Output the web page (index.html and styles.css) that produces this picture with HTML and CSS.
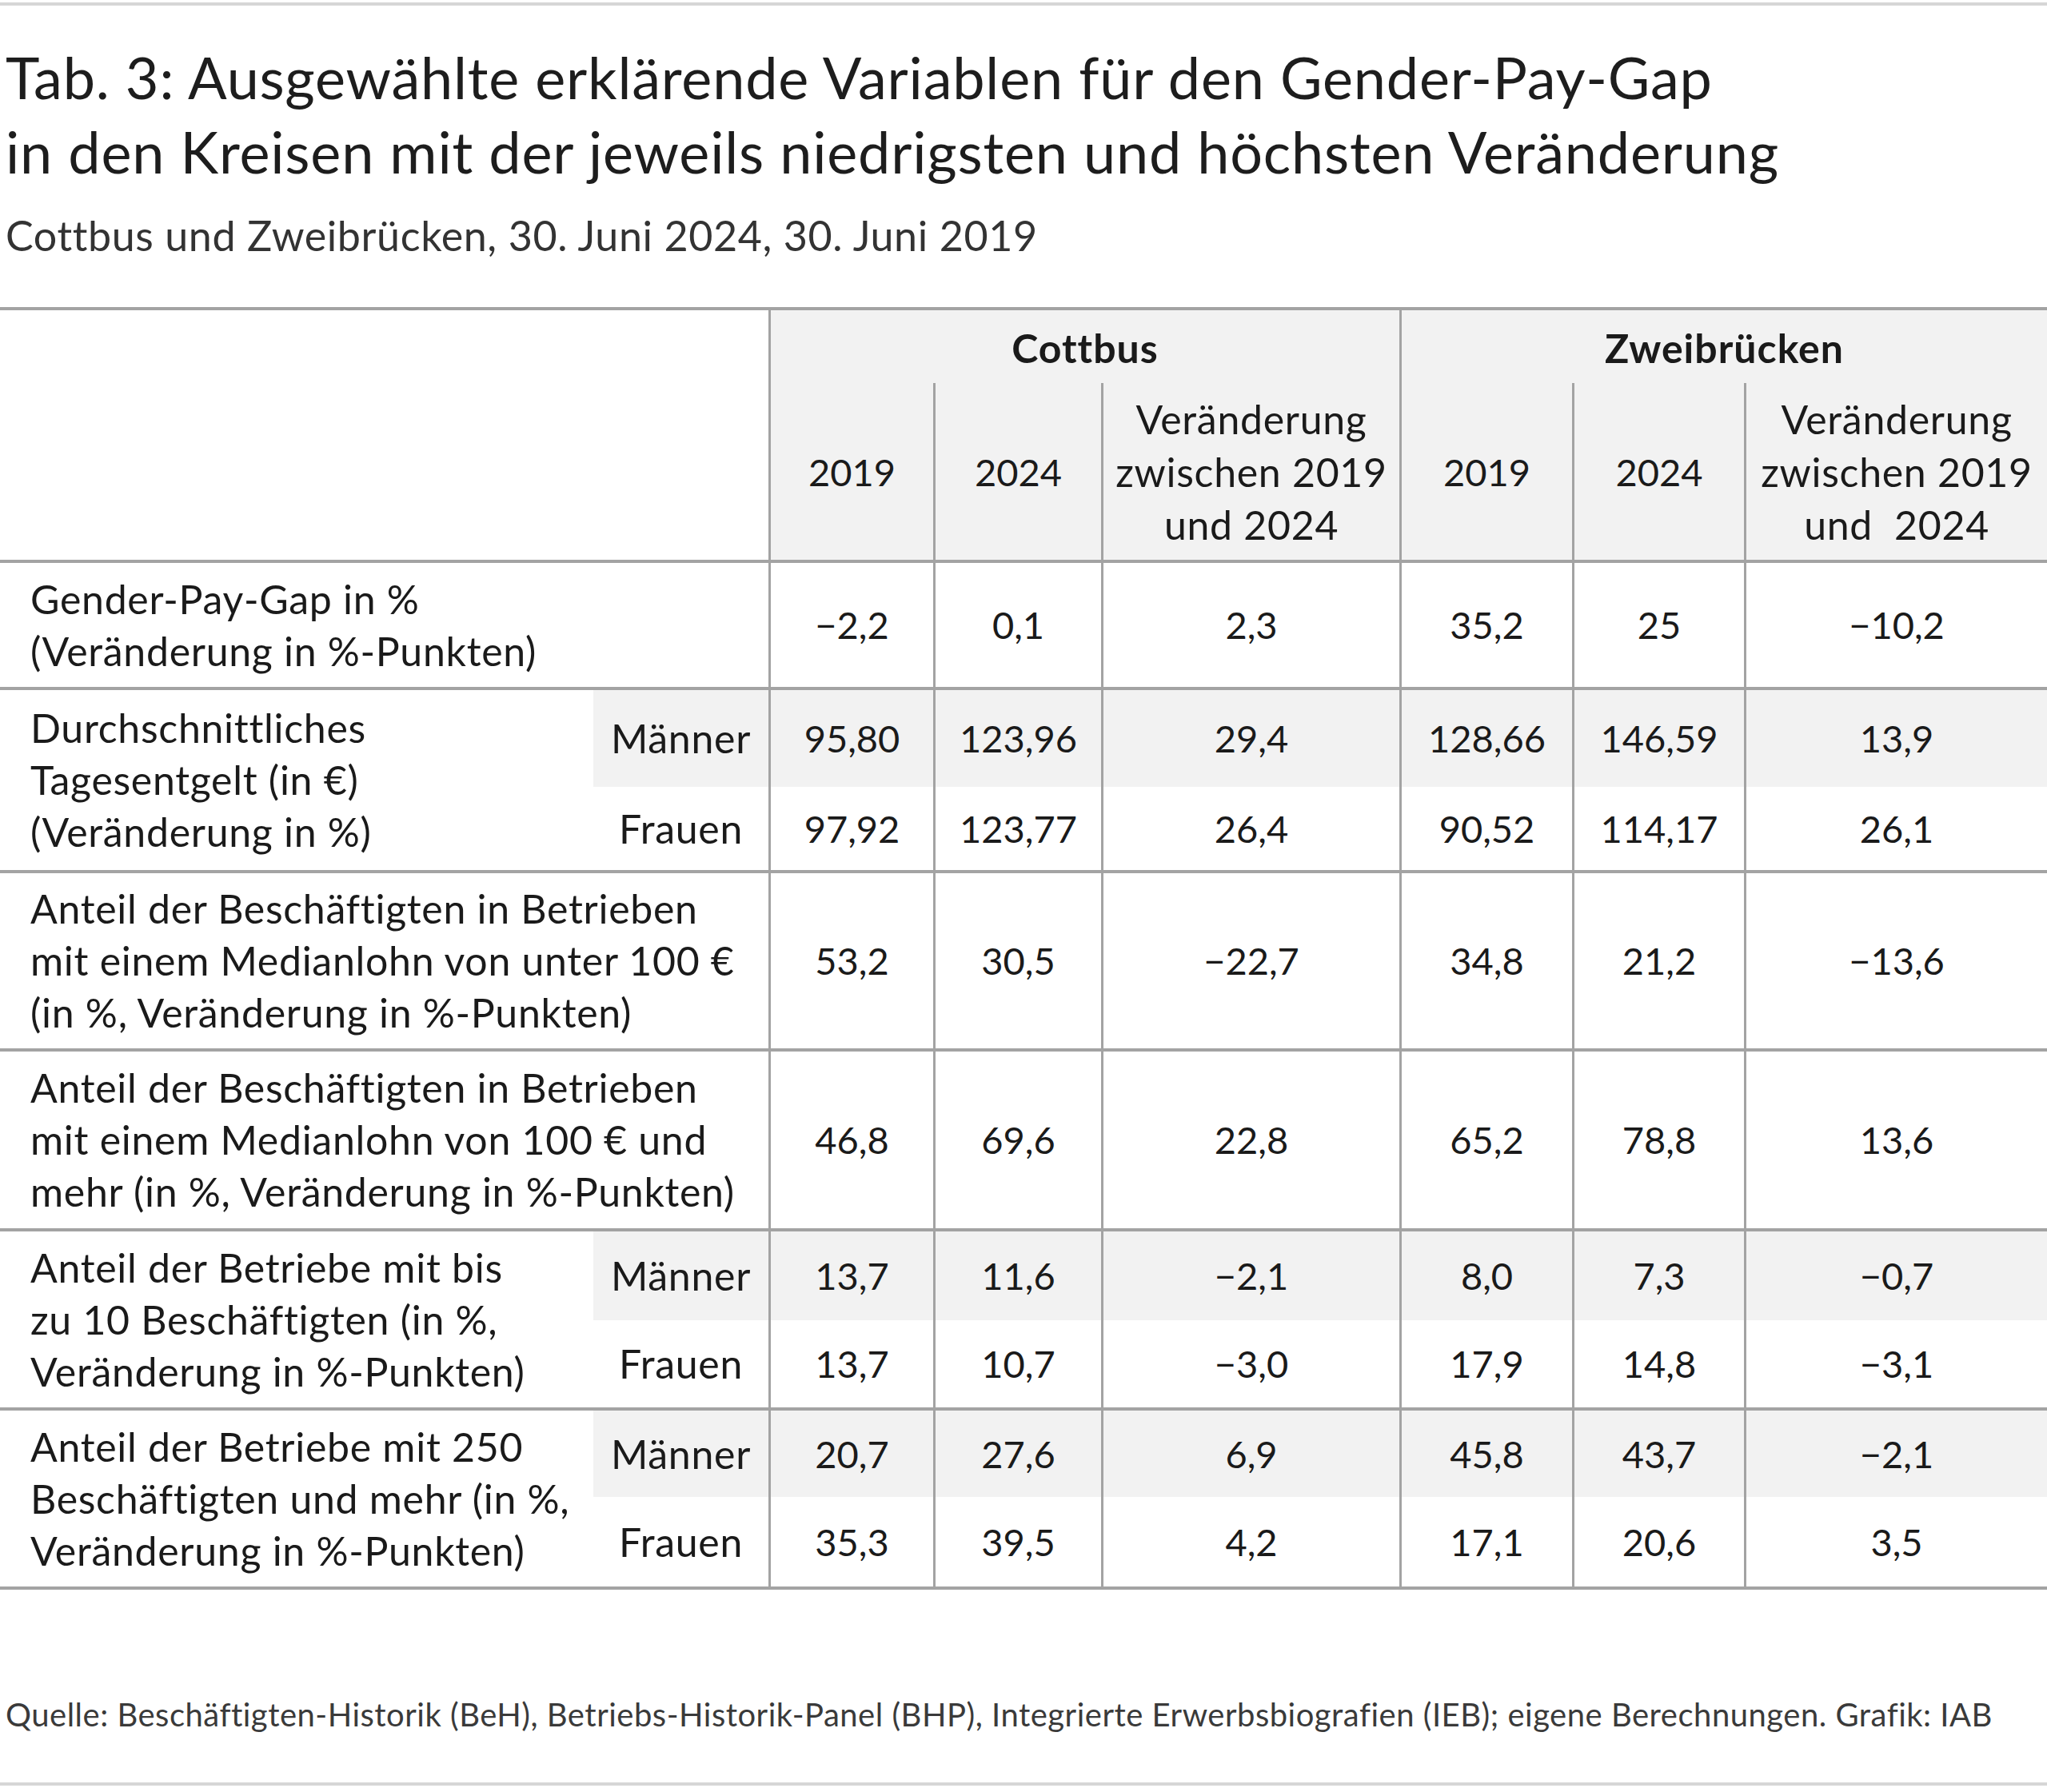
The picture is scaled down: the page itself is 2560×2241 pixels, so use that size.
FILE: index.html
```html
<!DOCTYPE html>
<html lang="de">
<head>
<meta charset="utf-8">
<title>Tab. 3</title>
<link rel="stylesheet" href="styles.css">
</head>
<body>
<div class="page">
  <div class="rule rule-top"></div>
  <h1 class="title">Tab. 3: Ausgewählte erklärende Variablen für den Gender-Pay-Gap<br>in den Kreisen mit der jeweils niedrigsten und höchsten Veränderung</h1>
  <p class="subtitle">Cottbus und Zweibrücken, 30. Juni 2024, 30. Juni 2019</p>

  <table class="tab">
    <colgroup>
      <col class="c-lbl"><col class="c-sex"><col class="c-a"><col class="c-b"><col class="c-c"><col class="c-d"><col class="c-e"><col class="c-f">
    </colgroup>
    <thead>
      <tr class="grp">
        <th class="corner" colspan="2" rowspan="2"></th>
        <th class="city" colspan="3">Cottbus</th>
        <th class="city" colspan="3">Zweibrücken</th>
      </tr>
      <tr class="sub">
        <th>2019</th><th>2024</th><th class="txt">Veränderung<br>zwischen 2019<br>und 2024</th>
        <th>2019</th><th>2024</th><th class="txt">Veränderung<br>zwischen 2019<br>und&nbsp; 2024</th>
      </tr>
    </thead>
    <tbody>
      <tr class="single h1">
        <td class="lbl" colspan="2">Gender-Pay-Gap in %<br>(Veränderung in %-Punkten)</td>
        <td>−2,2</td><td>0,1</td><td>2,3</td><td>35,2</td><td>25</td><td>−10,2</td>
      </tr>
    </tbody>
    <tbody>
      <tr class="m h2m">
        <td class="lbl" rowspan="2">Durchschnittliches<br>Tagesentgelt (in €)<br>(Veränderung in %)</td>
        <td class="sex">Männer</td>
        <td>95,80</td><td>123,96</td><td>29,4</td><td>128,66</td><td>146,59</td><td>13,9</td>
      </tr>
      <tr class="f h2f">
        <td class="sex">Frauen</td>
        <td>97,92</td><td>123,77</td><td>26,4</td><td>90,52</td><td>114,17</td><td>26,1</td>
      </tr>
    </tbody>
    <tbody>
      <tr class="single h3">
        <td class="lbl" colspan="2">Anteil der Beschäftigten in Betrieben<br>mit einem Medianlohn von unter 100 €<br>(in %, Veränderung in %-Punkten)</td>
        <td>53,2</td><td>30,5</td><td>−22,7</td><td>34,8</td><td>21,2</td><td>−13,6</td>
      </tr>
    </tbody>
    <tbody>
      <tr class="single h4">
        <td class="lbl" colspan="2">Anteil der Beschäftigten in Betrieben<br>mit einem Medianlohn von 100 € und<br>mehr (in %, Veränderung in %-Punkten)</td>
        <td>46,8</td><td>69,6</td><td>22,8</td><td>65,2</td><td>78,8</td><td>13,6</td>
      </tr>
    </tbody>
    <tbody>
      <tr class="m h5m">
        <td class="lbl" rowspan="2">Anteil der Betriebe mit bis<br>zu 10 Beschäftigten (in %,<br>Veränderung in %-Punkten)</td>
        <td class="sex">Männer</td>
        <td>13,7</td><td>11,6</td><td>−2,1</td><td>8,0</td><td>7,3</td><td>−0,7</td>
      </tr>
      <tr class="f h5f">
        <td class="sex">Frauen</td>
        <td>13,7</td><td>10,7</td><td>−3,0</td><td>17,9</td><td>14,8</td><td>−3,1</td>
      </tr>
    </tbody>
    <tbody class="last">
      <tr class="m h6m">
        <td class="lbl" rowspan="2">Anteil der Betriebe mit 250<br>Beschäftigten und mehr (in %,<br>Veränderung in %-Punkten)</td>
        <td class="sex">Männer</td>
        <td>20,7</td><td>27,6</td><td>6,9</td><td>45,8</td><td>43,7</td><td>−2,1</td>
      </tr>
      <tr class="f h6f">
        <td class="sex">Frauen</td>
        <td>35,3</td><td>39,5</td><td>4,2</td><td>17,1</td><td>20,6</td><td>3,5</td>
      </tr>
    </tbody>
  </table>

  <p class="source">Quelle: Beschäftigten-Historik (BeH), Betriebs-Historik-Panel (BHP), Integrierte Erwerbsbiografien (IEB); eigene Berechnungen. Grafik: IAB</p>
  <div class="rule rule-bottom"></div>
</div>
</body>
</html>
```

FILE: styles.css
```css
html, body {
  margin: 0;
  padding: 0;
  background: #ffffff;
}

body {
  font-family: Lato, "Open Sans", "Liberation Sans", sans-serif;
  color: #1a1a1a;
}

.page {
  width: 2560px;
  display: flex;
  flex-direction: column;
}

.rule {
  height: 4px;
  background: #d6d6d6;
}

.rule-top {
  margin-top: 3px;
}

.title {
  margin: 43px 0 0 0;
  padding-left: 7px;
  font-size: 72px;
  letter-spacing: 0.8px;
  line-height: 93px;
  font-weight: 400;
  color: #1d1d1d;
  white-space: nowrap;
}

.subtitle {
  margin: 23px 0 0 0;
  padding-left: 7px;
  font-size: 52px;
  letter-spacing: 0.6px;
  line-height: 70px;
  color: #333333;
  white-space: nowrap;
}

/* table */
.tab {
  margin-top: 55px;
  width: 2560px;
  table-layout: fixed;
  border-collapse: separate;
  border-spacing: 0;
  font-size: 47px;
  line-height: 65px;
  color: #1a1a1a;
}

.c-lbl { width: 742px; }
.c-sex { width: 219px; }
.c-a { width: 206px; }
.c-b { width: 210px; }
.c-c { width: 373px; }
.c-d { width: 216px; }
.c-e { width: 215px; }
.c-f { width: 379px; }

.tab th,
.tab td {
  box-sizing: border-box;
  padding: 0;
  text-align: center;
  vertical-align: middle;
  white-space: nowrap;
  font-weight: 400;
}

.tab td {
  border-left: 3px solid #a3a3a3;
}

.tab td.lbl,
.tab td.sex,
.tab th.txt {
  font-size: 50px;
  letter-spacing: 0.7px;
}

.tab td.lbl {
  border-left: 0;
  text-align: left;
  padding-left: 38px;
  background: #ffffff;
}

.tab td.sex {
  border-left: 0;
}

/* header */
.grp th {
  border-top: 4px solid #a3a3a3;
  height: 95px;
}

.grp th.corner {
  background: #ffffff;
}

.grp th.city {
  background: #f2f2f2;
  border-left: 3px solid #a3a3a3;
  font-size: 50px;
  letter-spacing: 1px;
  font-weight: 700;
  padding-top: 4px;
}

.sub th {
  background: #f2f2f2;
  border-left: 3px solid #a3a3a3;
  height: 221px;
  line-height: 66px;
}

/* body rows: horizontal group rules */
.single td,
.m td {
  border-top: 4px solid #a3a3a3;
}

.m td {
  background: #f2f2f2;
}

.last .f td,
.last td.lbl {
  border-bottom: 4px solid #a3a3a3;
}

.h1 td { height: 159px; }
.h2m td { height: 125px; }
.h2f td { height: 104px; }
.h3 td { height: 223px; }
.h4 td { height: 225px; }
.h5m td { height: 115px; }
.h5f td { height: 109px; }
.h6m td { height: 112px; }
.h6f td { height: 116px; }

.source {
  margin: 131px 0 0 0;
  padding-left: 7px;
  font-size: 40px;
  letter-spacing: 0.5px;
  line-height: 50px;
  color: #3a3a3a;
  white-space: nowrap;
}

.rule-bottom {
  margin-top: 60px;
}
```
